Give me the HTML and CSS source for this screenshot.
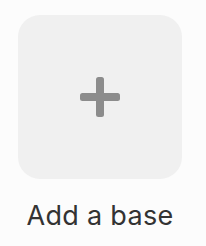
FILE: index.html
```html
<!DOCTYPE html>
<html>
<head>
<meta charset="utf-8">
<link rel="stylesheet" href="styles.css">
</head>
<body>
<div class="tile">
  <div class="box">
    <svg class="plus" width="40" height="40" viewBox="0 0 40 40">
      <rect x="0" y="16" width="40" height="8" rx="2.5" fill="#8c8c8c"/>
      <rect x="16" y="0" width="8" height="40" rx="2.5" fill="#8c8c8c"/>
    </svg>
  </div>
  <div class="label">Add a base</div>
</div>
</body>
</html>
```
FILE: styles.css
```css
html, body {
  margin: 0;
  padding: 0;
  background: #fcfcfc;
}
body {
  width: 206px;
  height: 246px;
  overflow: hidden;
  font-family: Inter, "Noto Sans", sans-serif;
}
.tile {
  width: 200px;
  display: flex;
  flex-direction: column;
  align-items: center;
  padding-top: 15px;
}
.box {
  width: 164px;
  height: 164px;
  border-radius: 22px;
  background: #f0f0f0;
  display: flex;
  align-items: center;
  justify-content: center;
}
.label {
  margin-top: 21px;
  font-size: 27px;
  line-height: 32px;
  letter-spacing: 0.3px;
  color: #333333;
}
```
